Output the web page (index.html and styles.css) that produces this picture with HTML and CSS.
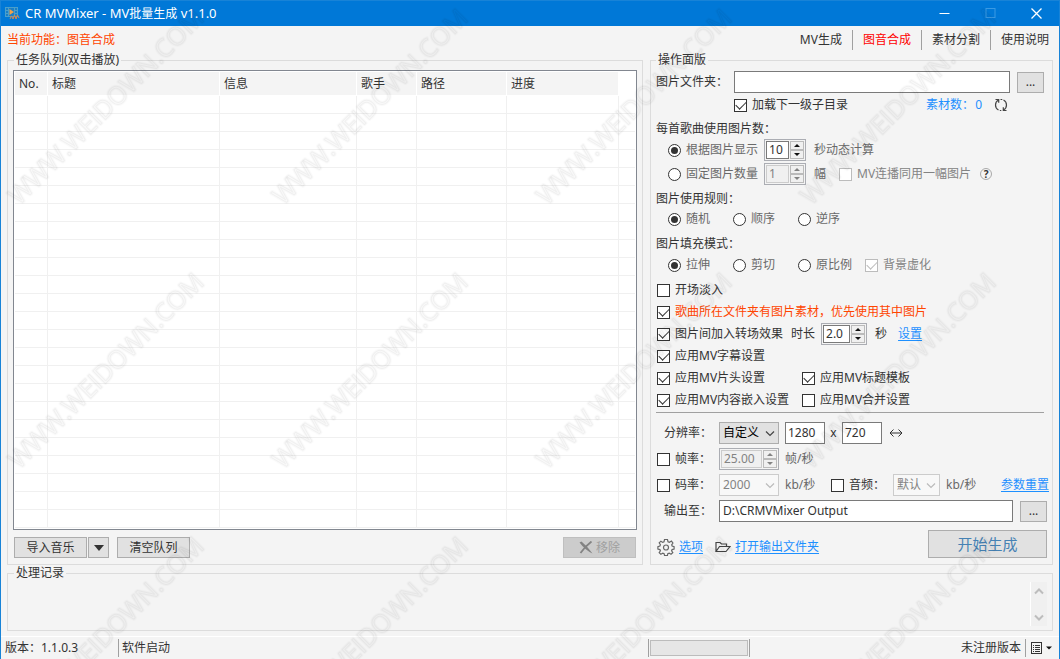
FILE: index.html
```html
<!DOCTYPE html>
<html lang="zh-CN">
<head>
<meta charset="utf-8">
<title>CR MVMixer - MV批量生成 v1.1.0</title>
<link rel="stylesheet" href="styles.css">
</head>
<body>
<div class="window">
  <header class="titlebar">
    <svg class="app-icon" width="15" height="13" viewBox="0 0 15 13" aria-hidden="true">
      <rect x="0.5" y="0.5" width="12" height="9" fill="#1a7fc6" stroke="#4a9fcb"/>
      <path d="M3.500 1v8M9.500 1v8M1 3.500h2M1 6.500h2M10 3.500h2M10 6.500h2" stroke="#4a9fcb"/>
      <path d="M4.500 2l4.500 3-4.500 3z" fill="#f0a24a"/>
      <path d="M5 12l1.500-3L8 12l1.500-4L11 12l1.500-4 1.500 3" fill="none" stroke="#d9874a"/>
    </svg>
    <h1 class="title">CR MVMixer - MV<span class="title-name">批量生成</span> v1.1.0</h1>
    <div class="window-buttons">
      <button type="button" class="window-button" aria-label="最小化"><svg width="11" height="11"><path d="M0.500 5.500h10" stroke="#fff"/></svg></button>
      <button type="button" class="window-button" aria-label="最大化" disabled><svg width="11" height="11"><rect x="1" y="0.500" width="9" height="9" fill="none" stroke="#3a9ae4"/></svg></button>
      <button type="button" class="window-button" aria-label="关闭"><svg width="11" height="11"><path d="M0.500 0.500l10 10M10.500 0.500l-10 10" stroke="#fff" stroke-width="1.300"/></svg></button>
    </div>
  </header>

  <nav class="modes">
    <p class="current-mode">当前功能：图音合成</p>
    <button type="button" class="mode">MV生成</button>
    <button type="button" class="mode mode-active">图音合成</button>
    <button type="button" class="mode">素材分割</button>
    <button type="button" class="mode">使用说明</button>
  </nav>

  <main class="panels">
    <fieldset class="group queue">
      <legend>任务队列(双击播放)</legend>
      <div class="table-box">
        <table class="tasks">
          <colgroup><col class="c-no"><col class="c-title"><col class="c-info"><col class="c-artist"><col class="c-path"><col class="c-progress"><col></colgroup>
          <thead><tr><th>No.</th><th>标题</th><th>信息</th><th>歌手</th><th>路径</th><th>进度</th><td></td></tr></thead>
          <tbody>
            <tr><td><td><td><td><td><td><td></tr>
            <tr><td><td><td><td><td><td><td></tr>
            <tr><td><td><td><td><td><td><td></tr>
            <tr><td><td><td><td><td><td><td></tr>
            <tr><td><td><td><td><td><td><td></tr>
            <tr><td><td><td><td><td><td><td></tr>
            <tr><td><td><td><td><td><td><td></tr>
            <tr><td><td><td><td><td><td><td></tr>
            <tr><td><td><td><td><td><td><td></tr>
            <tr><td><td><td><td><td><td><td></tr>
            <tr><td><td><td><td><td><td><td></tr>
            <tr><td><td><td><td><td><td><td></tr>
            <tr><td><td><td><td><td><td><td></tr>
            <tr><td><td><td><td><td><td><td></tr>
            <tr><td><td><td><td><td><td><td></tr>
            <tr><td><td><td><td><td><td><td></tr>
            <tr><td><td><td><td><td><td><td></tr>
            <tr><td><td><td><td><td><td><td></tr>
            <tr><td><td><td><td><td><td><td></tr>
            <tr><td><td><td><td><td><td><td></tr>
            <tr><td><td><td><td><td><td><td></tr>
            <tr><td><td><td><td><td><td><td></tr>
            <tr><td><td><td><td><td><td><td></tr>
            <tr><td><td><td><td><td><td><td></tr>
          </tbody>
        </table>
      </div>
      <div class="queue-actions">
        <button type="button" class="btn btn-wide">导入音乐</button>
        <button type="button" class="btn btn-drop" aria-label="更多导入方式"><svg width="10" height="6"><path d="M0 0h10L5 6z" fill="#333"/></svg></button>
        <button type="button" class="btn btn-wide btn-clear">清空队列</button>
        <button type="button" class="btn btn-wide btn-remove" disabled><svg width="14" height="13" viewBox="0 0 14 13"><path d="M0.500 1.500L2.500 0.500Q8 5 13.500 12.500Q6 9 0.500 1.500z" fill="#838383"/><path d="M12.500 0.500Q6 5.500 1.500 12" fill="none" stroke="#838383" stroke-width="1.800"/></svg>移除</button>
      </div>
    </fieldset>

    <fieldset class="group settings">
      <legend>操作面版</legend>

      <div class="row row-inset">
        <label class="label-folder" for="folder">图片文件夹：</label>
        <input class="text grow" id="folder" type="text">
        <button type="button" class="btn btn-browse btn-after" aria-label="浏览图片文件夹">...</button>
      </div>
      <div class="row row-short row-subfolder">
        <label class="check"><input type="checkbox" checked>加载下一级子目录</label>
        <span class="count">素材数：<span class="count-value">0</span></span>
        <button type="button" class="icon-button" aria-label="刷新"><svg width="14" height="14" viewBox="0 0 14 14" fill="none" stroke="#444" stroke-width="1.200"><path d="M4.500 12Q1.500 10.500 1.500 7T4.500 2M1.500 1.500h3.200v3.300M9.500 2Q12.500 3.500 12.500 7T9.500 12M12.500 12.500H9.300V9.200M6.500 1.500h1.800M5.800 12.500h1.500"/></svg></button>
      </div>

      <div class="row row-short heading">每首歌曲使用图片数：</div>
      <div class="row row-indent">
        <label class="radio"><input type="radio" name="count" checked>根据图片显示</label>
        <span class="spinner spinner-sm"><input type="text" value="10" aria-label="每张图片显示秒数"><span class="steps"><button type="button" aria-label="增加"></button><button type="button" aria-label="减少"></button></span></span>
        <span class="muted unit">秒动态计算</span>
      </div>
      <div class="row row-indent">
        <label class="radio"><input type="radio" name="count">固定图片数量</label>
        <span class="spinner spinner-sm"><input type="text" value="1" aria-label="固定图片数量" disabled><span class="steps"><button type="button" aria-label="增加" disabled></button><button type="button" aria-label="减少" disabled></button></span></span>
        <span class="muted unit">幅</span>
        <label class="check check-off check-same"><input type="checkbox" disabled>MV连播同用一幅图片</label>
        <button type="button" class="help" aria-label="帮助">?</button>
      </div>

      <div class="row row-short heading">图片使用规则：</div>
      <div class="row row-short row-indent options">
        <label class="radio"><input type="radio" name="rule" checked>随机</label>
        <label class="radio"><input type="radio" name="rule">顺序</label>
        <label class="radio"><input type="radio" name="rule">逆序</label>
      </div>

      <div class="row heading">图片填充模式：</div>
      <div class="row row-short row-indent options">
        <label class="radio"><input type="radio" name="fill" checked>拉伸</label>
        <label class="radio"><input type="radio" name="fill">剪切</label>
        <label class="radio"><input type="radio" name="fill">原比例</label>
        <label class="check check-off"><input type="checkbox" checked disabled>背景虚化</label>
      </div>

      <div class="effects">
        <div class="row row-short"><label class="check"><input type="checkbox">开场淡入</label></div>
        <div class="row row-short"><label class="check warn"><input type="checkbox" checked>歌曲所在文件夹有图片素材，优先使用其中图片</label></div>
        <div class="row row-short">
          <label class="check"><input type="checkbox" checked>图片间加入转场效果</label>
          <label class="duration" for="duration">时长</label>
          <span class="spinner spinner-md"><input type="text" id="duration" value="2.0"><span class="steps"><button type="button" aria-label="增加"></button><button type="button" aria-label="减少"></button></span></span>
          <span class="unit">秒</span>
          <a class="link-set" href="#transition">设置</a>
        </div>
        <div class="row row-short"><label class="check"><input type="checkbox" checked>应用MV字幕设置</label></div>
        <div class="row row-short pair">
          <label class="check"><input type="checkbox" checked>应用MV片头设置</label>
          <label class="check"><input type="checkbox" checked>应用MV标题模板</label>
        </div>
        <div class="row row-short pair">
          <label class="check"><input type="checkbox" checked>应用MV内容嵌入设置</label>
          <label class="check"><input type="checkbox">应用MV合并设置</label>
        </div>
      </div>
      <hr class="divider">

      <div class="row row-tall">
        <label class="field-label field-plain" for="resolution">分辨率：</label>
        <span class="select"><select id="resolution"><option>自定义</option></select><svg width="10" height="6"><path d="M1 .5l4 4 4-4" fill="none" stroke="#444" stroke-width="1.200"/></svg></span>
        <input class="text text-size" type="text" value="1280" aria-label="宽度">
        <span class="times">x</span>
        <input class="text text-size size-height" type="text" value="720" aria-label="高度">
        <button type="button" class="icon-button swap" aria-label="交换宽高"><svg width="14" height="8" viewBox="0 0 14 8" fill="none" stroke="#333"><path d="M1 4h12M4.500 .5L1 4l3.500 3.500M9.500 .5L13 4 9.500 7.500"/></svg></button>
      </div>
      <div class="row row-tall">
        <label class="check field-label"><input type="checkbox">帧率：</label>
        <span class="spinner spinner-lg"><input type="text" value="25.00" aria-label="帧率数值" disabled><span class="steps"><button type="button" aria-label="增加" disabled></button><button type="button" aria-label="减少" disabled></button></span></span>
        <span class="muted unit-near">帧/秒</span>
      </div>
      <div class="row row-tall">
        <label class="check field-label"><input type="checkbox">码率：</label>
        <span class="select select-off"><select aria-label="码率数值" disabled><option>2000</option></select><svg width="10" height="6"><path d="M1 .5l4 4 4-4" fill="none" stroke="#bbb" stroke-width="1.200"/></svg></span>
        <span class="muted unit-near unit-rate">kb/秒</span>
        <label class="check check-audio"><input type="checkbox">音频：</label>
        <span class="select select-off select-audio"><select aria-label="音频码率" disabled><option>默认</option></select><svg width="10" height="6"><path d="M1 .5l4 4 4-4" fill="none" stroke="#bbb" stroke-width="1.200"/></svg></span>
        <span class="muted unit-near">kb/秒</span>
        <a class="push" href="#reset">参数重置</a>
      </div>
      <div class="row row-tall row-output">
        <label class="field-label field-plain" for="output">输出至：</label>
        <input class="text grow" id="output" type="text" value="D:\CRMVMixer Output">
        <button type="button" class="btn btn-browse btn-after" aria-label="浏览输出文件夹">...</button>
      </div>
      <div class="row row-output start-row">
        <svg width="18" height="18" viewBox="0 0 18 18" fill="none" stroke="#666" stroke-width="1.200" aria-hidden="true"><path d="M7.500 1.500h3l.5 2.200 1.400.6 2-1.200 1.500 1.900-1.200 1.800.4 1.200 2 .6v2.400l-2 .6-.5 1.200 1.200 1.900-1.800 1.600-1.800-1.200-1.400.6-.4 2H7.600l-.5-2-1.300-.6-1.900 1.200-1.700-1.700 1.200-1.800-.5-1.200-2-.6V8.600l2-.6.5-1.300-1.200-1.800 1.700-1.700 1.800 1.200 1.300-.6z"/><circle cx="9" cy="9.500" r="2.500"/></svg>
        <a class="link-options" href="#options">选项</a>
        <svg class="folder-icon" width="16" height="12" viewBox="0 0 16 12" fill="none" stroke="#444" stroke-width="1.200" aria-hidden="true"><path d="M1 10.500V1.500h4l1.500 1.500H11.500v2.500M1 10.500l3.500-5h10.500l-4 5z"/></svg>
        <a class="link-open" href="#output">打开输出文件夹</a>
        <button type="button" class="btn btn-start push">开始生成</button>
      </div>
    </fieldset>
  </main>

  <fieldset class="group log">
    <legend>处理记录</legend>
    <div class="log-body">
      <textarea class="log-text" aria-label="处理记录" readonly></textarea>
      <div class="scroll" aria-hidden="true">
        <svg width="10" height="7"><path d="M1 5.500l4-4 4 4" fill="none" stroke="#bdbdbd" stroke-width="2"/></svg>
        <svg width="10" height="7"><path d="M1 1.500l4 4 4-4" fill="none" stroke="#bdbdbd" stroke-width="2"/></svg>
      </div>
    </div>
  </fieldset>

  <footer class="status">
    <span class="status-version">版本：1.1.0.3</span>
    <span class="status-message">软件启动</span>
    <span class="status-progress"><span class="bar" role="progressbar" aria-label="进度"></span></span>
    <span class="status-license">未注册版本</span>
    <button type="button" class="status-menu" aria-label="菜单"><svg width="21" height="12" viewBox="0 0 21 12"><rect x="0.500" y="0.500" width="10" height="11" fill="none" stroke="#333"/><path d="M2 3.500h1M4 3.500h5M2 5.500h1M4 5.500h5M2 7.500h1M4 7.500h5M2 9.500h1M4 9.500h5" stroke="#333"/><path d="M15 4.500h6l-3 3z" fill="#111"/></svg></button>
  </footer>

  <svg class="watermark" aria-hidden="true">
    <defs>
      <pattern id="mark" width="264" height="264" patternUnits="userSpaceOnUse">
        <text class="mark-text mark-halo" transform="translate(18 206) rotate(-45)">WWW.WEIDOWN.COM</text>
        <text class="mark-text mark-line" transform="translate(18 206) rotate(-45)">WWW.WEIDOWN.COM</text>
      </pattern>
    </defs>
    <rect width="100%" height="100%" fill="url(#mark)"/>
  </svg>
</div>
</body>
</html>
```

FILE: styles.css
```css
* { box-sizing: border-box; }

body {
  margin: 0;
  background: #f4f4f4;
  color: #333;
  font: 12px/16px "Noto Sans", "Noto Sans CJK SC", sans-serif;
}

button, input, select, textarea { font: inherit; color: inherit; margin: 0; }
button { padding: 0; border: 0; background: none; white-space: nowrap; }
a { color: #1e90ff; text-underline-offset: 2px; }
svg { display: block; flex: none; }

.window {
  position: relative;
  display: flex;
  flex-direction: column;
  min-height: 100vh;
  border: 1px solid #1883d7;
  border-top: 0;
  overflow: hidden;
}

/* Title bar */
.titlebar {
  display: flex;
  align-items: center;
  height: 26px;
  padding-left: 4px;
  background: #0078d7;
  border-top: 1px solid #1883d7;
  color: #fff;
}
.title { margin: 0 0 0 5px; font-size: 13px; font-weight: 400; }
.title-name { font-size: 12px; }
.window-buttons { display: flex; margin-left: auto; }
.window-button { display: grid; place-items: center; width: 46px; height: 24px; }

/* Mode switcher */
.modes { display: flex; align-items: center; height: 26px; padding: 2px 10px 0 6px; }
.current-mode { margin: 0 auto 0 0; color: #ff4500; }
.mode { padding: 0 10px; height: 20px; border-left: 1px solid #a0a0a0; }
.mode:first-of-type { border-left: 0; }
.mode:last-of-type { padding-right: 0; }
.mode-active { color: #f00; }

/* Panels */
.panels {
  flex: 1;
  display: grid;
  grid-template-columns: minmax(0, 1fr) 403px;
  gap: 7px;
  padding: 0 6px;
}
.group { min-width: 0; margin: 0; border: 1px solid #dcdcdc; }
.group legend { height: 16px; padding: 0 2px; margin-left: 1px; }
.queue { display: flex; flex-direction: column; padding: 2px 5px 6px; }

.table-box { flex: 1; padding: 1px; border: 1px solid #828790; background: #fff; }
.tasks { width: 100%; table-layout: fixed; border-collapse: separate; border-spacing: 0; }
.tasks col.c-no { width: 33px; }
.tasks col.c-title { width: 172px; }
.tasks col.c-info { width: 137px; }
.tasks col.c-artist { width: 60px; }
.tasks col.c-path { width: 90px; }
.tasks col.c-progress { width: 112px; }
.tasks th {
  height: 24px;
  padding: 0 0 0 4px;
  border-right: 1px solid #fff;
  border-bottom: 1px solid #fff;
  background: #f4f4f4;
  font-weight: 400;
  text-align: left;
}
.tasks tbody td { height: 18px; padding: 0; border-right: 1px solid #f0f0f0; border-bottom: 1px solid #f0f0f0; }
.tasks tbody td:last-child { border-right: 0; }

.queue-actions { display: flex; padding: 7px 1px 0; }
.btn {
  display: flex;
  align-items: center;
  justify-content: center;
  height: 21px;
  border: 1px solid #adadad;
  background: #e1e1e1;
}
.btn-wide { width: 73px; }
.btn-drop { width: 21px; margin-left: 1px; }
.btn-clear { margin-left: 8px; }
.btn-remove { margin-left: auto; gap: 3px; background: #ccc; border-color: #bfbfbf; color: #a0a0a0; }
.btn-browse { width: 27px; }
.btn-after { margin-left: 7px; }
.btn-start { align-self: flex-start; width: 119px; height: 28px; color: #4682b4; font-size: 15px; }

/* Settings rows */
.settings { padding: 2px 3px 0 5px; }
.settings legend { margin-left: 0; }
.row { display: flex; align-items: center; height: 24px; white-space: nowrap; }
.row-short { height: 22px; }
.row-tall { height: 26px; }
.row-inset { padding-right: 5px; }
.row-indent { padding-left: 12px; }
.row-output { padding-right: 2px; }
.row-subfolder { padding-left: 78px; }
.heading { padding-top: 3px; }
.grow { flex: 1; min-width: 0; }
.push { margin-left: auto; }
.muted { color: #696969; }
.unit { margin-left: 8px; }
.unit-near { margin-left: 6px; }
.unit-rate { width: 40px; }
.warn { color: #ff4500; }
.label-folder { width: 78px; }

.text { height: 22px; padding: 0 3px 2px; border: 1px solid #7a7a7a; border-radius: 0; background: #fff; }
.text-size { width: 40px; margin-left: 6px; padding: 0 2px 2px; }
.times { width: 17px; text-align: center; }
.size-height { margin-left: 0; }

.check, .radio { display: flex; align-items: center; gap: 5px; }
.check input, .radio input {
  appearance: none;
  flex: none;
  display: grid;
  place-items: center;
  width: 13px;
  height: 13px;
  border: 1px solid #333;
  background: #fff;
}
.effects .check, .field-label { padding-left: 1px; }
.radio { color: #696969; }
.radio input { border-radius: 50%; }
.radio input:checked::before { content: ""; width: 7px; height: 7px; border-radius: 50%; background: #333; }
.check input:checked::before {
  content: "";
  width: 9px;
  height: 5px;
  margin-bottom: 3px;
  border: solid #333;
  border-width: 0 0 1px 1px;
  transform: rotate(-45deg);
}
.check-off { color: #838383; }
.check-off input, .check-off input:checked::before { border-color: #bcbcbc; }
.check-same { margin-left: 13px; }

.count { margin-left: auto; color: #1e90ff; }
.count-value { margin-left: 1px; }
.icon-button { display: grid; place-items: center; }
.row-subfolder .icon-button { margin: 0 41px 0 12px; }
.help {
  width: 12px;
  height: 12px;
  margin-left: 9px;
  border: 1px solid #aaa;
  border-radius: 50%;
  font-size: 10px;
  line-height: 10px;
  font-weight: 700;
}
.options .radio { min-width: 65px; }
.options .check { margin-left: 2px; }
.effects { margin-top: 3px; }
.pair { display: grid; grid-template-columns: 145px auto; justify-content: start; }
.duration { margin-left: 8px; }
.link-set { margin-left: 11px; }

.spinner { display: flex; gap: 1px; height: 22px; padding: 1px; border: 1px solid #abadb3; background: #f4f4f4; margin-left: 6px; }
.spinner input { flex: 1; min-width: 0; width: 0; padding: 0 2px; border: 1px solid #7a7a7a; border-radius: 0; background: #fff; }
.spinner-sm { width: 42px; }
.spinner-md { width: 46px; }
.spinner-lg { width: 60px; margin-left: 0; }
.steps { display: grid; grid-template-rows: 1fr 1fr; width: 14px; }
.steps button { display: grid; place-items: center; border: 1px solid #bbb; background: #f0f0f0; }
.steps button::before { content: ""; border: 3px solid transparent; border-top: 0; border-bottom: 3px solid #111; }
.steps button:last-child::before { border-top: 3px solid #111; border-bottom: 0; }
.steps button:disabled::before { border-bottom-color: #838383; }
.steps button:last-child:disabled::before { border-top-color: #838383; border-bottom-color: transparent; }
.spinner input:disabled { border-color: #ccc; background: #f0f0f0; color: #838383; }

.divider { margin: 1px 5px 7px 0; border: 0; border-top: 1px solid #a0a0a0; }
.field-label { width: 63px; }
.field-plain { padding-left: 8px; }
.select { position: relative; width: 60px; height: 22px; }
.select select {
  appearance: none;
  width: 100%;
  height: 100%;
  padding: 0 3px;
  border: 1px solid #adadad;
  border-radius: 0;
  background: #e1e1e1;
  color: #000;
}
.select svg { position: absolute; right: 4px; top: 9px; pointer-events: none; }
.select-off select { border-color: #ccc; background: #f8f8f8; color: #838383; opacity: 1; }
.select-audio { width: 47px; }
.check-audio { width: 62px; margin-left: 6px; }
.swap { margin-left: 7px; }
.start-row { height: 34px; margin-top: 6px; padding-left: 1px; }
.link-options { margin-left: 4px; }
.folder-icon { margin-left: 12px; }
.link-open { margin-left: 4px; }

/* Log */
.log { margin: 0 6px; padding: 1px 5px 4px; }
.log-body { display: flex; height: 44px; }
.log-text { flex: 1; resize: none; border: 0; padding: 0; background: transparent; overflow: hidden; }
.scroll {
  display: flex;
  flex-direction: column;
  align-items: center;
  justify-content: space-between;
  width: 17px;
  padding: 6px 0 5px;
  border-left: 1px solid #fff;
  background: #f0f0f0;
}

/* Status bar */
.status {
  display: grid;
  grid-template-columns: 117px minmax(0, 530fr) 102px minmax(0, 275fr) 34px;
  align-items: center;
  height: 23px;
  margin-top: 5px;
  border-top: 1px solid #fff;
  background: #f4f4f4;
}
.status > * { display: flex; align-items: center; height: 18px; }
.status-version { padding-left: 4px; }
.status-message { padding-left: 3px; border-left: 1px solid #a0a0a0; }
.status-progress { padding: 0 1px; border: solid #a0a0a0; border-width: 0 1px; }
.bar { flex: 1; height: 16px; border: 1px solid #bcbcbc; background: #e6e6e6; }
.status-license { justify-content: flex-end; padding-right: 4px; }
.status-menu { padding-left: 5px; border-left: 1px solid #a0a0a0; }

/* Diagonal watermark over the whole window */
.watermark { position: absolute; inset: 0; width: 100%; height: 100%; pointer-events: none; }
.mark-text { font: 400 25px "Open Sans", sans-serif; fill: none; stroke: #000; stroke-linejoin: round; }
.mark-halo { stroke-opacity: 0.02; stroke-width: 3; }
.mark-line { stroke-opacity: 0.04; stroke-width: 1; }
```
